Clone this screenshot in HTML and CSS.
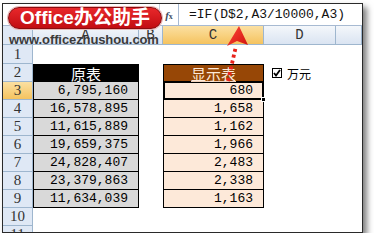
FILE: index.html
```html
<!DOCTYPE html>
<html>
<head>
<meta charset="utf-8">
<link rel="stylesheet" href="styles.css">
</head>
<body>
<div class="frame">
  <div class="fbar">
    <div class="namebox"></div>
    <div class="fx"><i>f</i><span>x</span></div>
    <div class="formula">=IF(D$2,A3/10000,A3)</div>
  </div>
  <div class="sheet">
    <div class="corner"></div><div class="ch">A</div><div class="ch">B</div><div class="ch on">C</div><div class="ch">D</div><div class="ch"></div>

    <div class="rh">1</div><div></div><div></div><div></div><div></div><div></div>

    <div class="rh">2</div><div class="bx top hd-black">原表</div><div></div><div class="bx top hd-brown"><u>显示表</u></div>
    <div class="opt"><span class="cb"><svg width="8" height="8" viewBox="0 0 8 8"><polyline points="1,4 3,6.5 7,1" fill="none" stroke="#000" stroke-width="1.8"/></svg></span>万元</div><div></div>

    <div class="rh on">3</div><div class="bx num">6,795,160</div><div></div><div class="bx val sel">680<span class="handle"></span></div><div></div><div></div>
    <div class="rh">4</div><div class="bx num">16,578,895</div><div></div><div class="bx val">1,658</div><div></div><div></div>
    <div class="rh">5</div><div class="bx num">11,615,889</div><div></div><div class="bx val">1,162</div><div></div><div></div>
    <div class="rh">6</div><div class="bx num">19,659,375</div><div></div><div class="bx val">1,966</div><div></div><div></div>
    <div class="rh">7</div><div class="bx num">24,828,407</div><div></div><div class="bx val">2,483</div><div></div><div></div>
    <div class="rh">8</div><div class="bx num">23,379,863</div><div></div><div class="bx val">2,338</div><div></div><div></div>
    <div class="rh">9</div><div class="bx num">11,634,039</div><div></div><div class="bx val">1,163</div><div></div><div></div>
    <div class="rh">10</div><div></div><div></div><div></div><div></div><div></div>
    <div class="rh">11</div><div></div><div></div><div></div><div></div><div></div>
  </div>

  <div class="logo">Office办公助手</div>
  <div class="url">www.officezhushou.com</div>
  <svg class="arrow" width="374" height="244" viewBox="0 0 374 244">
    <defs>
      <linearGradient id="rg" x1="0" y1="0" x2="1" y2="1">
        <stop offset="0" stop-color="#ff4a3a"/>
        <stop offset="1" stop-color="#d0120c"/>
      </linearGradient>
    </defs>
    <line x1="228" y1="81" x2="236" y2="46" stroke="#e8231b" stroke-width="3.8" stroke-dasharray="3 3"/>
    <polygon points="239,26 248,45 237,41 227,46" fill="url(#rg)"/>
  </svg>
</div>
</body>
</html>
```

FILE: styles.css
```css
* { box-sizing: border-box; }
body { margin: 0; background: #fff; }

.frame {
  position: relative;
  margin: 3px 0 0 2px;
  width: 361px;
  height: 230px;
  border: 1px solid #2a2a2a;
  box-shadow: 4px 4px 6px rgba(0, 0, 0, 0.5);
  overflow: hidden;
  background: #fff;
}

.fbar {
  display: flex;
  height: 22px;
  border-bottom: 1px solid #a7bad2;
  background: #fff;
}
.namebox { width: 157px; border-right: 1px solid #c5d2e2; }
.fx {
  width: 18px;
  display: flex;
  align-items: center;
  justify-content: center;
  font: bold 11px "Liberation Serif", serif;
  color: #3a4a5e;
}
.fx span { font-size: 8px; margin-top: 4px; }
.formula {
  flex: 1;
  border-left: 1px solid #a7bad2;
  padding-left: 10px;
  font: 13px "Liberation Mono", monospace;
  line-height: 21px;
  color: #111;
}

.sheet {
  display: grid;
  grid-template-columns: 30px 106px 24px 101px 72px 1fr;
  grid-template-rows: 19px 19px repeat(10, 18px);
}

.corner {
  background: #dfe8f5;
  border-right: 1px solid #9eb6ce;
  border-bottom: 1px solid #9eb6ce;
}
.ch {
  background: linear-gradient(#f4f7fb, #dae4f2);
  border-right: 1px solid #9eb6ce;
  border-bottom: 1px solid #9eb6ce;
  display: flex;
  align-items: center;
  justify-content: center;
  font: 14px "Liberation Mono", monospace;
  color: #333;
}
.rh {
  background: #dfe8f5;
  border-right: 1px solid #9eb6ce;
  border-bottom: 1px solid #9eb6ce;
  display: flex;
  align-items: center;
  justify-content: center;
  font: 15px "Liberation Serif", serif;
  color: #333;
}
.ch.on, .rh.on { background: linear-gradient(#fbe0a2, #f5c35f); }

.bx {
  border: 1px solid #000;
  border-top: none;
  display: flex;
  align-items: center;
}
.bx.top { border-top: 1px solid #000; }

.hd-black {
  background: #000;
  color: #fff;
  justify-content: center;
  font: 15px "Noto Sans CJK SC", sans-serif;
}
.hd-brown {
  background: #974706;
  color: #fde9d9;
  justify-content: center;
  font: 15px "Noto Sans CJK SC", sans-serif;
}
.hd-brown u { text-decoration-color: #f3d2bb; text-underline-offset: 1px; }

.num, .val {
  justify-content: flex-end;
  padding-right: 10px;
  font: 13px "Liberation Mono", monospace;
  color: #000;
}
.num { background: #d9d9d9; }
.val { background: #fde9d9; }

.sel {
  position: relative;
  box-shadow: inset 0 0 0 1px #000;
}
.handle {
  position: absolute;
  right: -3px;
  bottom: -3px;
  width: 5px;
  height: 5px;
  background: #000;
  border: 1px solid #fff;
}

.opt {
  display: flex;
  align-items: center;
  padding-left: 8px;
  gap: 5px;
  font: 12px "Noto Sans CJK SC", sans-serif;
  color: #000;
}
.cb {
  width: 10px;
  height: 10px;
  border: 1px solid #000;
  background: #fff;
  display: flex;
  align-items: center;
  justify-content: center;
}
.cb svg { display: block; }

.logo {
  position: absolute;
  left: 5px;
  top: 3px;
  width: 154px;
  height: 22px;
  border-radius: 11px;
  background: linear-gradient(#e8282b, #c20d12);
  border: 1px solid #8a0b0e;
  box-shadow: 0 0 0 1px #eab6b6;
  color: #fff;
  font: bold 19px "Liberation Sans", "Noto Sans CJK SC", sans-serif;
  line-height: 20px;
  text-align: center;
}
.url {
  position: absolute;
  left: 6px;
  top: 28px;
  font: bold 13px "Liberation Sans", sans-serif;
  letter-spacing: -0.1px;
  line-height: 16px;
  color: #3b3b3b;
}
.arrow {
  position: absolute;
  left: -3px;
  top: -4px;
}
```
